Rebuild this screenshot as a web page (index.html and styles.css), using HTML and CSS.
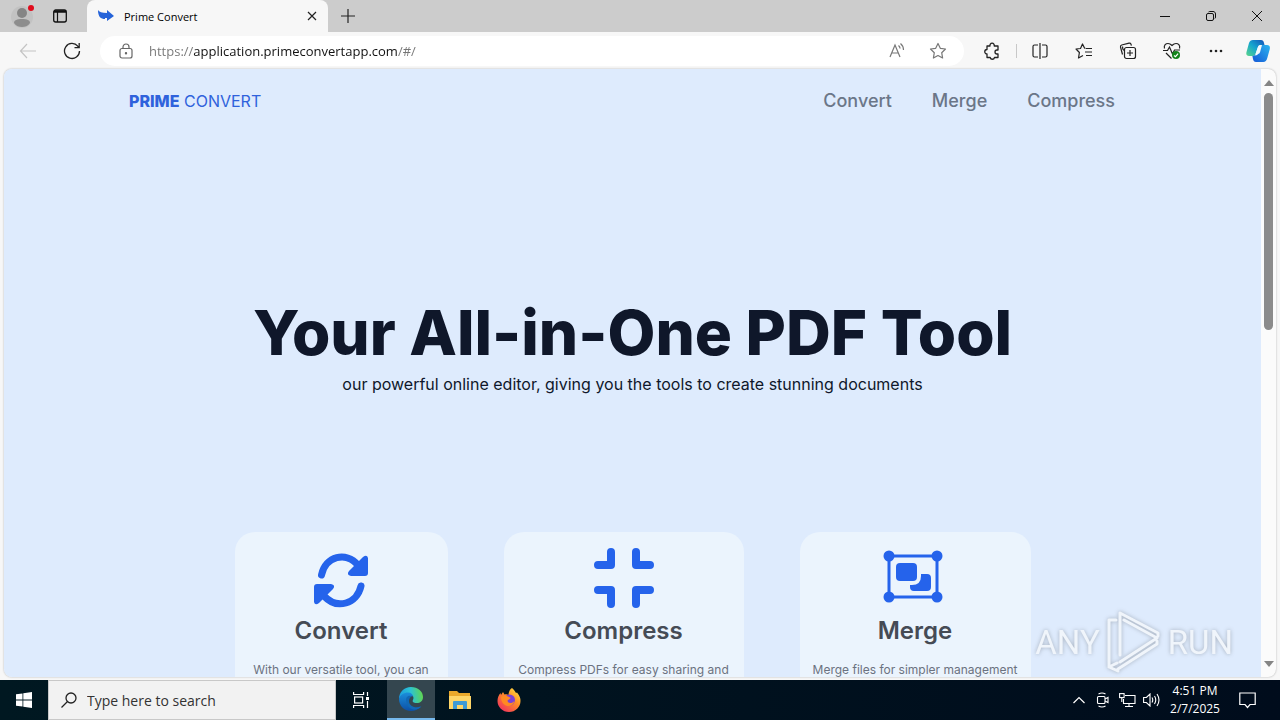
FILE: index.html
```html
<!DOCTYPE html>
<html lang="en">
<head>
  <meta charset="UTF-8" />
  <meta name="viewport" content="width=device-width, initial-scale=1.0" />
  <title>Prime Convert</title>
  <link rel="stylesheet" href="styles.css">
</head>
<body>
  <!-- Tab strip -->
  <header class="tab-strip">
    <button class="profile" aria-label="Profile">
      <svg width="34" height="32" viewBox="0 0 34 32">
        <circle cx="18" cy="17" r="11" fill="#c2c2c2"/>
        <circle cx="18" cy="13" r="5" fill="#858585"/>
        <path d="M10 23c0-3 3-4 8-4s8 1 8 4c-2 3-5 4-8 4s-6-1-8-4z" fill="#8d8d8d"/>
        <circle cx="27" cy="8" r="3" fill="#e00b1c"/>
      </svg>
    </button>
    <button class="tab-actions" aria-label="Tab actions">
      <svg width="16" height="16" viewBox="0 0 16 16" fill="none" stroke="#111">
        <rect x="1.700" y="2" width="12.600" height="12" rx="2" stroke-width="1.300"/>
        <path d="M2 3.500h12" stroke-width="2.500"/>
        <path d="M5.500 4v10" stroke-width="1.200"/>
      </svg>
    </button>
    <div class="tab">
      <svg width="16" height="16" viewBox="0 0 16 16">
        <path d="M0 2c1 2 4 3 9 3V2l7 6-7 5v-3h-2v1C3 11 0 9 0 2z" fill="#2563d9"/>
      </svg>
      <span class="tab-title">Prime Convert</span>
      <button class="tab-close" aria-label="Close tab">
        <svg width="10" height="10" viewBox="0 0 10 10" stroke="#222" stroke-width="1.200"><path d="M1 1l8 8M9 1L1 9"/></svg>
      </button>
    </div>
    <button class="new-tab" aria-label="New tab">
      <svg width="14" height="14" viewBox="0 0 14 14" stroke="#222" stroke-width="1.200"><path d="M7 0v14M0 7h14"/></svg>
    </button>
    <div class="window-buttons">
      <button aria-label="Minimize"><svg width="10" height="10" viewBox="0 0 10 10" stroke="#111"><path d="M0 5.500h10"/></svg></button>
      <button aria-label="Restore"><svg width="10" height="10" viewBox="0 0 10 10" fill="none" stroke="#111"><rect x=".5" y="2.500" width="7" height="7" rx="1.500"/><path d="M2.500 1C3 .5 3.500.5 4 .5h3c1.500 0 2.500 1 2.500 2.500v3c0 .8-.2 1.200-.6 1.500"/></svg></button>
      <button aria-label="Close"><svg width="10" height="10" viewBox="0 0 10 10" stroke="#111"><path d="M0 0l10 10M10 0L0 10"/></svg></button>
    </div>
  </header>

  <!-- Toolbar -->
  <div class="toolbar">
    <button aria-label="Back" disabled>
      <svg width="18" height="16" viewBox="0 0 18 16" fill="none" stroke="#c4c4c4" stroke-width="1.200"><path d="M8 1L1.500 8 8 15M1.500 8H17"/></svg>
    </button>
    <button aria-label="Refresh">
      <svg width="18" height="18" viewBox="0 0 18 18" fill="none" stroke="#222" stroke-width="1.300"><path d="M16.500 9A7.500 7.500 0 1 1 14.800 4.200L16 5.500M16.200 1v4.600h-4.700"/></svg>
    </button>
    <div class="address-bar">
      <svg width="14" height="16" viewBox="0 0 14 16" fill="none" stroke="#666" stroke-width="1.200"><rect x="1" y="5.500" width="12" height="9.500" rx="2"/><path d="M4 5.500V4a3 3 0 0 1 6 0v1.500"/><circle cx="7" cy="10.200" r=".6" fill="#666"/></svg>
      <input class="address" type="text" aria-label="Address" value="https://application.primeconvertapp.com/#/" spellcheck="false">
      <button aria-label="Read aloud">
        <svg width="18" height="16" viewBox="0 0 18 16" fill="none" stroke="#777" stroke-width="1.200"><path d="M1 14L6 2l5 12M2.800 10h6.500M9.500 2.500c1 .8 1.500 1.700 1.600 3M11.500 .5c2 1.700 3 3.500 3 6.500"/></svg>
      </button>
      <button aria-label="Add to favorites">
        <svg width="18" height="18" viewBox="0 0 18 18" fill="none" stroke="#777" stroke-width="1.200" stroke-linejoin="round"><path d="M9 1.500l2.300 4.800 5.200.7-3.800 3.700.9 5.300L9 13.500 4.400 16l.9-5.300L1.500 7l5.200-.7z"/></svg>
      </button>
    </div>
    <div class="tools">
      <button aria-label="Extensions">
        <svg width="16" height="18" viewBox="0 0 16 18" fill="none" stroke="#222" stroke-width="1.300" stroke-linejoin="round"><path d="M3 4h3a2.200 2.200 0 1 1 4.200 0H14v4h-1a2 2 0 0 0 0 4h1v3.500h-3.500a2.200 2.200 0 0 1-4.300 0H3V12a2.200 2.200 0 1 1 0-4.500z"/></svg>
      </button>
      <button class="divided" aria-label="Split screen">
        <svg width="16" height="16" viewBox="0 0 16 16" fill="none" stroke="#222" stroke-width="1.200"><path d="M8 0v16M6 2H2.500Q1 2 1 3.500v9Q1 14 2.500 14H6M10 2h3.500Q15 2 15 3.500v9q0 1.500-1.500 1.500H10"/></svg>
      </button>
      <button aria-label="Favorites">
        <svg width="18" height="16" viewBox="0 0 18 16" fill="none" stroke="#222" stroke-width="1.200" stroke-linejoin="round"><path d="M10.500 5.500L9.500 5 7.500 1 5.500 5.500 1 6l3.400 3.500L3.500 15 8 12.500M11 5.500h6M10 9h7M11 12.500h6"/></svg>
      </button>
      <button aria-label="Collections">
        <svg width="18" height="18" viewBox="0 0 18 18" fill="none" stroke="#222" stroke-width="1.200"><rect x="5.500" y="5.500" width="11" height="11" rx="2"/><path d="M11 8v6M8 11h6M3.500 12.500L1.500 5q-.3-1.500 1.200-2L10 1.200q1.500-.3 2 1l.4 1.500M5.500 8.500q-2-.5-2-4"/></svg>
      </button>
      <button aria-label="Browser essentials">
        <svg width="18" height="18" viewBox="0 0 18 18" fill="none" stroke="#222" stroke-width="1.200"><path d="M1.500 6.500C.5 3 3 1.500 5 1.500c2 0 3 1 4 2 1-1 2-2 4-2s4.500 1.500 3.500 5M0 8.500h4.500L6.500 5l3 7L11.500 8H17M3 11l5.500 5.500"/><circle cx="13" cy="13" r="4" fill="#13831b" stroke="none"/><path d="M11 13.500l1.500 1.200 2.600-3" stroke="#fff"/></svg>
      </button>
      <button aria-label="Settings and more">
        <svg width="16" height="4" viewBox="0 0 16 4" fill="#222"><circle cx="3" cy="2" r="1.300"/><circle cx="8" cy="2" r="1.300"/><circle cx="13" cy="2" r="1.300"/></svg>
      </button>
      <button aria-label="Copilot">
        <svg width="24" height="24" viewBox="0 0 24 24">
          <defs>
            <linearGradient id="cpA" x1="0" y1="1" x2="1" y2="0"><stop offset="0" stop-color="#5bd68a"/><stop offset=".5" stop-color="#14a5cf"/><stop offset="1" stop-color="#1450b8"/></linearGradient>
            <linearGradient id="cpB" x1="0" y1="1" x2="1" y2="0"><stop offset="0" stop-color="#1558d6"/><stop offset="1" stop-color="#2bb4ef"/></linearGradient>
          </defs>
          <path d="M7 1h8q2.500 0 3 3l.5 2h-4q-2 0-2.600 2l-2.300 7q-.7 2-2.600 2H3Q-.5 17 .5 13L3 4q1-3 4-3z" fill="url(#cpA)"/>
          <path d="M16 6h5q3.500 0 2.800 4l-2.500 9q-1 4-4 4H10q-2.500 0-3-3l-.6-3q2.500 0 3.400-2h2q1.800 0 2.300-2z" fill="url(#cpB)"/>
          <path d="M12 8q.5-2 3-2l-2.500 8q-.7 2.500-3.500 2.500z" fill="#f2faff"/>
        </svg>
      </button>
    </div>
  </div>

  <!-- Page -->
  <div class="viewport">
    <div class="page">
      <nav class="navbar">
        <a class="logo" href="#/"><b>PRIME</b> CONVERT</a>
        <div class="nav-links">
          <a href="#/convert">Convert</a>
          <a href="#/merge">Merge</a>
          <a href="#/compress">Compress</a>
        </div>
      </nav>

      <section class="hero">
        <h1>Your All-in-One PDF Tool</h1>
        <p>our powerful online editor, giving you the tools to create stunning documents</p>
      </section>

      <section class="cards">
        <article class="card">
          <svg class="card-icon" viewBox="0 0 64 64" fill="#2563eb"><path d="M12.500 29C16.500 10 37 5 49 19" fill="none" stroke="#2563eb" stroke-width="7" stroke-linecap="round"/><path d="M59 12v15q0 3-3 3H42q-5-1-2-5L54 11q4-3 5 1z"/><path d="M52 40C48 58 28 64 15 50" fill="none" stroke="#2563eb" stroke-width="7" stroke-linecap="round"/><path d="M5 56V41q0-3 3-3h14q5 1 2 5L10 57q-4 3-5-1z"/></svg>
          <h2>Convert</h2>
          <p>With our versatile tool, you can</p>
        </article>
        <article class="card">
          <svg class="card-icon" viewBox="0 0 64 64" fill="none" stroke="#2563eb" stroke-width="8" stroke-linecap="round" stroke-linejoin="round"><path d="M6 19h13V6M58 19H44V6M6 44h13v14M58 44H44v14"/></svg>
          <h2>Compress</h2>
          <p>Compress PDFs for easy sharing and</p>
        </article>
        <article class="card">
          <svg class="card-icon" viewBox="0 0 64 64" fill="#2563eb"><rect x="6" y="10" width="48" height="41" fill="none" stroke="#2563eb" stroke-width="3"/><circle cx="6" cy="10" r="5.500"/><circle cx="54" cy="10" r="5.500"/><circle cx="6" cy="51" r="5.500"/><circle cx="54" cy="51" r="5.500"/><rect x="13" y="17" width="21" height="18" rx="4"/><path d="M38 28h6q4 0 4 4v9q0 4-4 4H31q-4 0-4-4v-2h2q9 0 9-9z"/></svg>
          <h2>Merge</h2>
          <p>Merge files for simpler management</p>
        </article>
      </section>
    </div>
    <div class="scrollbar">
      <svg width="10" height="6" viewBox="0 0 10 6" fill="#858585"><path d="M5 0l5 6H0z"/></svg>
      <div class="thumb"></div>
      <svg width="10" height="6" viewBox="0 0 10 6" fill="#858585"><path d="M5 6L0 0h10z"/></svg>
    </div>
  </div>

  <div class="watermark">
    <span>ANY</span>
    <svg width="56" height="64" viewBox="0 0 56 64" fill="none" stroke="#f4f7fb" stroke-width="3" stroke-linejoin="round" stroke-linecap="round">
      <path d="M52 26v-3L14 3v42M18 10l33 18L14 52M10 10H3v47l8-4M12 59l39-25v-3M3 57l9 4"/>
    </svg>
    <span>RUN</span>
  </div>

  <!-- Taskbar -->
  <footer class="taskbar">
    <button class="task" aria-label="Start">
      <svg width="16" height="16" viewBox="0 0 16 16" fill="#fff"><path d="M0 2.300L6.500 1.400v6.200H0zM7.300 1.300L16 0v7.600H7.300zM0 8.400h6.500v6.200L0 13.700zM7.300 8.400H16V16l-8.700-1.300z"/></svg>
    </button>
    <label class="search">
      <svg width="16" height="16" viewBox="0 0 16 16" fill="none" stroke="#222" stroke-width="1.300"><circle cx="10" cy="6" r="5"/><path d="M6.500 9.500L.5 15.500"/></svg>
      <input type="text" placeholder="Type here to search" aria-label="Search">
    </label>
    <button class="task" aria-label="Task view">
      <svg width="16" height="16" viewBox="0 0 16 16" fill="none" stroke="#fff" stroke-width="1.200"><path d="M.6 0v2.500h10V0M.6 16v-2.500h10V16M14.500 0v4M14.500 9v7"/><rect x="1.600" y="5" width="8" height="6"/><rect x="13" y="5" width="3" height="3" fill="#fff" stroke="none"/></svg>
    </button>
    <button class="task active" aria-label="Microsoft Edge">
      <svg width="24" height="24" viewBox="0 0 24 24">
        <defs>
          <linearGradient id="edA" x1="0" y1=".5" x2="1" y2=".4"><stop offset="0" stop-color="#1a9be0"/><stop offset=".5" stop-color="#2cc3d3"/><stop offset="1" stop-color="#62d64c"/></linearGradient>
          <linearGradient id="edB" x1="0" y1="0" x2="0" y2="1"><stop offset="0" stop-color="#1b8edb"/><stop offset="1" stop-color="#0d50a6"/></linearGradient>
        </defs>
        <path d="M0 12C0 5 5 0 12 0s12 4.500 12 10c0 4-3 6-6 6-4 0-5-1.500-4-3 2-4-2-6-5-6-5 0-8 3-9 5z" fill="url(#edA)"/>
        <path d="M0 12c1-4 5-6.500 9-6.500 3 0 5 2 5 4-3-1-5 2-5 4.500 0 4 4 6.500 8 6.500 2 0 4-.8 5-1.500-2 3-6 5-10 5C5 24 0 18.500 0 12z" fill="url(#edB)"/>
        <path d="M7 13c0-3 2-5 6-4-2 1-3 3-3 5 0 4 4 6.500 8 6.500 2 0 3.500-.6 4.500-1.200-2 2.500-5 3.700-8 3.200C10 22 7 17 7 13z" fill="#1168b5"/>
      </svg>
    </button>
    <button class="task" aria-label="File Explorer">
      <svg width="22" height="20" viewBox="0 0 22 20"><path d="M0 1h8l2 2h11v16H0z" fill="#eba92b"/><path d="M0 6h22v13H0z" fill="#ffd668"/><path d="M4 19v-7q0-1 1-1h12q1 0 1 1v7h-4v-4H8v4z" fill="#3f9bd6"/></svg>
    </button>
    <button class="task" aria-label="Firefox">
      <svg width="24" height="24" viewBox="0 0 24 24">
        <defs><linearGradient id="ffA" x1="1" y1="0" x2=".2" y2="1"><stop offset="0" stop-color="#fff04a"/><stop offset=".45" stop-color="#ff9026"/><stop offset="1" stop-color="#f0305e"/></linearGradient></defs>
        <path d="M15 0c2 2 3 3 4 5l1-.5c3 3.500 3.500 6 3.500 8.500 0 6-5 11-11.500 11S.5 19 .5 13c0-3 1-6 3-8l.5 2 2-3 1.500 2.500c2-.5 3-.2 4 .5C11.500 4 13 1 15 0z" fill="url(#ffA)"/>
        <circle cx="12.500" cy="12" r="5.500" fill="#7a41d8"/>
        <path d="M4 9c2-2 5-2 7-.5 1 .8 2.500.5 2.500 1.500s-3 1.500-3 3c1 3 5 2.500 7 0-1 4-4 5.500-7 5C6 17 4 13 4 9z" fill="#ff8a22"/>
      </svg>
    </button>
    <div class="tray">
      <button aria-label="Show hidden icons"><svg width="12" height="8" viewBox="0 0 12 8" fill="none" stroke="#fff" stroke-width="1.200"><path d="M.5 7L6 1.500 11.500 7"/></svg></button>
      <button aria-label="Meet now"><svg width="14" height="16" viewBox="0 0 14 16" fill="none" stroke="#fff" stroke-width="1.100"><rect x="1.500" y="4.500" width="7.500" height="7" rx="1"/><path d="M9 7l3-1.500v5L9 9M2.500 2Q6 0 9.500 2M2.500 14q3.500 2 7 0"/></svg></button>
      <button aria-label="Network"><svg width="17" height="15" viewBox="0 0 17 15" fill="none" stroke="#fff" stroke-width="1.100"><path d="M6 2.500h10v8H4.500V6M10 10.500v3M6 13.500h8"/><rect x=".6" y=".6" width="4.500" height="4"/><path d="M2.800 4.500V9"/></svg></button>
      <button aria-label="Volume"><svg width="17" height="14" viewBox="0 0 17 14" fill="none" stroke="#fff" stroke-width="1.100"><path d="M.6 4.500h2.800L7 1v12L3.400 9.500H.6zM9 4.500q1.500 2.500 0 5M11.500 3q2.500 4 0 8M14 1q4 6 0 12"/></svg></button>
    </div>
    <time class="clock" datetime="2025-02-07T16:51">4:51 PM<br>2/7/2025</time>
    <button class="notifications" aria-label="Notifications"><svg width="17" height="17" viewBox="0 0 17 17" fill="none" stroke="#fff" stroke-width="1.200"><path d="M.8 1h15.400v11.500H11l-2.500 3-2.500-3H.8z"/></svg></button>
  </footer>
</body>
</html>
```

FILE: styles.css
```css
* {
  box-sizing: border-box;
}

body {
  margin: 0;
  height: 100vh;
  display: flex;
  flex-direction: column;
  overflow: hidden;
  background-color: #f7f7f7;
  font-family: "Open Sans", "Noto Sans", sans-serif;
  font-size: 12px;
}

button {
  display: flex;
  align-items: center;
  justify-content: center;
  padding: 0;
  border: none;
  background: none;
}

svg {
  flex: none;
}

a {
  text-decoration: none;
}

/* tab strip */
.tab-strip {
  display: flex;
  align-items: stretch;
  height: 32px;
  background-color: #cccccc;
}

.profile {
  padding-left: 4px;
}

.tab-actions {
  width: 44px;
}

.tab {
  display: flex;
  align-items: center;
  gap: 10px;
  width: 241px;
  margin-left: 5px;
  padding: 0 10px 0 11px;
  border-radius: 8px 8px 0 0;
  background-color: #f7f7f7;
}

.tab-title {
  flex: 1;
  font-size: 11px;
}

.tab-close {
  width: 12px;
}

.new-tab {
  width: 40px;
}

.window-buttons {
  display: flex;
  margin-left: auto;
}

.window-buttons button {
  width: 46px;
}

/* toolbar */
.toolbar {
  display: flex;
  align-items: center;
  height: 37px;
  padding-left: 6px;
}

.toolbar > button {
  width: 44px;
}

.address-bar {
  display: flex;
  flex: 1;
  align-items: center;
  gap: 16px;
  height: 30px;
  margin-left: 6px;
  padding: 0 14px 0 19px;
  border-radius: 15px;
  background-color: #fff;
}

.address-bar button {
  width: 24px;
}

.address {
  flex: 1;
  min-width: 0;
  padding: 0;
  border: none;
  outline: none;
  font: 13px "Open Sans", "Noto Sans", sans-serif;
  background: linear-gradient(to right, #757575 45px, #111 45px, #111 249px, #757575 249px);
  -webkit-background-clip: text;
  background-clip: text;
  color: transparent;
}

.tools {
  display: flex;
  align-items: center;
  padding-left: 6px;
}

.tools button {
  width: 44px;
  height: 28px;
}

.tools .divided {
  width: 48px;
  padding-left: 4px;
  background: linear-gradient(#c8c8c8, #c8c8c8) 2px 50% / 1px 14px no-repeat;
}

.tools button:last-child {
  width: 42px;
  padding-right: 2px;
}

/* page */
.viewport {
  display: flex;
  flex: 1;
  min-height: 0;
  margin: 0 4px 3px;
  border-radius: 8px;
  overflow: hidden;
  background-color: #fbfbfb;
  box-shadow: 0 0 2px #aaa;
}

.page {
  flex: 1;
  overflow: hidden;
  background-color: #deebfd;
  font-family: Inter, "Liberation Sans", sans-serif;
}

.navbar {
  display: flex;
  align-items: center;
  justify-content: space-between;
  height: 63px;
  padding: 0 146px 0 125px;
}

.logo {
  font-family: Inter, sans-serif;
  font-size: 16px;
  color: #2f62dc;
}

.logo b {
  font-weight: 800;
}

.nav-links {
  display: flex;
  gap: 40px;
}

.nav-links a {
  font-size: 18px;
  font-weight: 500;
  color: #6b7688;
}

.hero {
  padding: 169px 0 136px;
  text-align: center;
  color: #0f172a;
}

.hero h1 {
  margin: 0;
  font-size: 62px;
  line-height: 64px;
  font-weight: 800;
}

.hero p {
  margin: 7px 0 0;
  font-size: 16px;
  line-height: 24px;
}

.cards {
  display: grid;
  grid-template-columns: 213fr 240fr 231fr;
  gap: 56px;
  max-width: 796px;
  margin: 0 auto;
}

.card {
  padding: 14px 0 32px;
  border-radius: 20px;
  background-color: #ebf4fd;
  text-align: center;
}

.card-icon {
  display: block;
  width: 64px;
  height: 64px;
  margin: 0 auto;
}

.card h2 {
  margin: 5px 0 15px;
  font-size: 24px;
  line-height: 32px;
  font-weight: 600;
  color: #454b55;
}

.card p {
  margin: 0;
  font-size: 12px;
  line-height: 16px;
  white-space: nowrap;
  color: #6b7280;
}

.scrollbar {
  display: flex;
  flex-direction: column;
  align-items: center;
  width: 15px;
  padding: 11px 0 10px;
}

.thumb {
  width: 9px;
  height: 237px;
  margin: 7px 0 auto;
  border-radius: 5px;
  background-color: #8b8b8b;
}

.watermark {
  position: absolute;
  right: 47px;
  bottom: 46px;
  display: flex;
  align-items: center;
  gap: 6px;
  font-family: Roboto, sans-serif;
  font-size: 33px;
  color: #f4f7fb;
  opacity: 0.85;
  filter: drop-shadow(0 0 2px #9aa3b0);
  pointer-events: none;
}

/* taskbar */
.taskbar {
  display: flex;
  align-items: stretch;
  height: 40px;
  background: linear-gradient(to right, #001821, #000c1c);
  color: #fff;
}

.task {
  width: 49px;
}

.task:first-child {
  width: 48px;
}

.task.active {
  width: 48px;
  margin-left: 2px;
  background-color: #34464f;
  border-bottom: 2px solid #76b9ed;
}

.search {
  display: flex;
  align-items: center;
  gap: 10px;
  width: 288px;
  padding-left: 12px;
  border: 1px solid #c8c8c8;
  background-color: #f2f2f2;
}

.search input {
  flex: 1;
  min-width: 0;
  padding: 0;
  border: none;
  outline: none;
  background: none;
  font: 14px "Open Sans", "Noto Sans", sans-serif;
}

.search input::placeholder {
  color: #333;
}

.tray {
  display: flex;
  margin-left: auto;
}

.tray button {
  width: 24px;
}

.clock {
  width: 64px;
  padding-top: 2px;
  font-size: 12px;
  line-height: 18px;
  text-align: center;
}

.notifications {
  width: 40px;
  margin-right: 13px;
}
```
